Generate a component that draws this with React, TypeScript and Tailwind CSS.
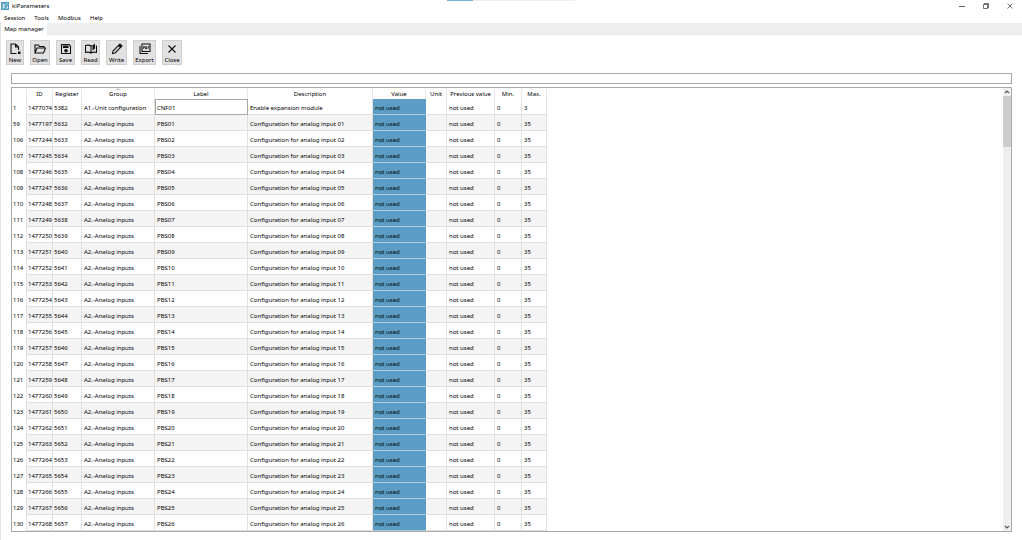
import React from 'react';
import clsx from 'clsx';

type Row = {
  index: number;
  id: number;
  register: number;
  group: string;
  label: string;
  description: string;
  max: number;
};

const pad = (n: number) => String(n).padStart(2, '0');

const rows: Row[] = [
  { index: 1, id: 1477074, register: 5382, group: 'A1.-Unit configuration', label: 'CNF01', description: 'Enable expansion module', max: 3 },
  ...Array.from({ length: 26 }, (_, i) => ({
    index: i === 0 ? 59 : 105 + i,
    id: i === 0 ? 1477197 : 1477243 + i,
    register: 5632 + i,
    group: 'A2.-Analog inputs',
    label: `PBS${pad(i + 1)}`,
    description: `Configuration for analog input ${pad(i + 1)}`,
    max: 35
  }))
];

const columns = [
  { name: '', width: 'w-[15px]' },
  { name: 'ID', width: 'w-[26px]' },
  { name: 'Register', width: 'w-[29px]' },
  { name: 'Group', width: 'w-[73px]', sorted: true },
  { name: 'Label', width: 'w-[93px]' },
  { name: 'Description', width: 'w-[125px]' },
  { name: 'Value', width: 'w-[53px]' },
  { name: 'Unit', width: 'w-[21px]' },
  { name: 'Previous value', width: 'w-[48px]' },
  { name: 'Min.', width: 'w-[27px]' },
  { name: 'Max.', width: 'w-[25px]' }
];

const tools = [
  {
    name: 'New',
    width: 'w-[18px]',
    icon: <>
        <path d="M15 21H4V2h9l6 6v6M13 2v6h6" />
        <path d="M18 17h5v5h-5z" fill="currentColor" stroke="none" />
      </>
  },
  {
    name: 'Open',
    width: 'w-[20px]',
    icon: <path d="M2 20V4h7l2 3h9v3M2 20l4-10h17l-4 10H2z" />
  },
  {
    name: 'Save',
    width: 'w-[19px]',
    icon: <>
        <path d="M3 3h15l3 3v15H3z" />
        <path d="M7 6h9v3H7z" fill="currentColor" />
        <circle cx="12" cy="15.500" r="2.500" fill="currentColor" />
      </>
  },
  {
    name: 'Read',
    width: 'w-[19px]',
    icon: <>
        <path d="M12 20c-3-2-7-2-11-1V5c4-1 8-1 11 1v14c3-2 7-2 11-1V5M12 6l3-1" />
        <path d="M15 5l5-4v10l-5 4z" fill="currentColor" stroke="none" />
      </>
  },
  {
    name: 'Write',
    width: 'w-[21px]',
    icon: <>
        <path d="M3 21l1-5L15 5l4 4L8 20z" />
        <path d="M16 4l2-2 4 4-2 2z" fill="currentColor" />
      </>
  },
  {
    name: 'Export',
    width: 'w-[23px]',
    icon: <>
        <path d="M6 2h16v15H6zM2 6v15h16" />
        <path d="M9 12V7h2v2.500H9M13 7v5h2V7zM20 7h-2v5M18 9.500h2" strokeWidth="1.300" />
      </>
  },
  {
    name: 'Close',
    width: 'w-[20px]',
    icon: <path d="M5 5l14 14M19 5L5 19" />
  }
];

function TitleBar() {
  return <header className="flex h-3 items-center justify-between pr-[9px]">
      <div className="flex items-center gap-[3px]">
        <svg viewBox="0 0 9 9" className="ml-px h-[8px] w-[8px]" aria-hidden="true">
          <path d="M0 0h9v9H0z" fill="#4d9cc0" />
          <path d="M2.500 1.500v6M5.500 2L3 5l2.500 2.500M7 4v3.500M7 1.500v1" stroke="#fff" strokeWidth="1" fill="none" />
        </svg>
        <h1>kiParameters</h1>
      </div>
      <div className="flex items-center gap-[18px]">
        <button type="button" aria-label="Minimize">
          <svg viewBox="0 0 6 6" className="h-[6px] w-[6px]"><path d="M0 3.500h6" stroke="#333" strokeWidth=".8" /></svg>
        </button>
        <button type="button" aria-label="Restore">
          <svg viewBox="0 0 6 6" className="h-[6px] w-[6px]"><path d="M.5 1.500h4v4h-4zM1.500 1.500v-1h4v4h-1" fill="none" stroke="#333" strokeWidth=".7" /></svg>
        </button>
        <button type="button" aria-label="Close window">
          <svg viewBox="0 0 6 6" className="h-[6px] w-[6px]"><path d="M.5.5l5 5M5.500.5l-5 5" stroke="#333" strokeWidth=".7" /></svg>
        </button>
      </div>
    </header>;
}

function Toolbar() {
  return <div className="flex gap-[6px] px-[5px] pt-[5px] pb-2">
      {tools.map(tool => <button key={tool.name} type="button" className={clsx('flex h-[25px] flex-col items-center justify-between border border-[#cfcfcf] bg-[#e1e1e1] pt-[2px]', tool.width)}>
          <svg viewBox="0 0 24 24" className="h-3 w-3 shrink-0 text-[#111]" fill="none" stroke="currentColor" strokeWidth="2.200">
            {tool.icon}
          </svg>
          <span>{tool.name}</span>
        </button>)}
    </div>;
}

function ParameterTable() {
  const cell = 'border-r border-b border-[#e0e0e0] p-0 pt-[2px] pl-[2px]';
  return <table className="w-[535px] table-fixed border-separate border-spacing-0 text-left">
      <thead>
        <tr className="h-[11px]">
          {columns.map(col => <th key={col.name} scope="col" aria-sort={col.sorted ? 'ascending' : undefined} className={clsx('relative border-r border-[#e8e8e8] p-0 text-center font-normal', col.width)}>
              {col.name}
              {col.sorted && <svg viewBox="0 0 6 3" className="absolute top-0 left-1/2 h-[3px] w-[6px] -translate-x-1/2"><path d="M1 2.500l2-2 2 2" fill="none" stroke="#777" strokeWidth=".7" /></svg>}
            </th>)}
        </tr>
      </thead>
      <tbody>
        {rows.map((row, i) => <tr key={row.id} className={clsx('h-4', i % 2 === 1 && 'bg-[#f4f4f4]')}>
            <th scope="row" className="border-r border-[#e0e0e0] bg-white p-0 pt-px pl-px text-left font-normal">{row.index}</th>
            <td className="border-r border-b border-[#e0e0e0] p-0 pt-[2px] pl-px">{row.id}</td>
            <td className="border-r border-b border-[#e0e0e0] p-0 pt-[2px] pl-px">{row.register}</td>
            <td className={cell}>{row.group}</td>
            <td className={clsx(cell, i === 0 && 'outline outline-1 -outline-offset-1 outline-[#a8a8a8]')}>{row.label}</td>
            <td className={cell}>{row.description}</td>
            <td className="border-b border-[#a9c9dc] bg-[#5b9dc4] p-0 pt-[2px] pl-[2px]">not used</td>
            <td className={cell} />
            <td className={cell}>not used</td>
            <td className={cell}>0</td>
            <td className={cell}>{row.max}</td>
          </tr>)}
      </tbody>
    </table>;
}

function ScrollBar() {
  return <div className="flex w-2 flex-col items-center bg-[#efefef]">
      <button type="button" aria-label="Scroll up" className="flex h-[8px] w-full items-center justify-center">
        <svg viewBox="0 0 6 6" className="h-[6px] w-[6px]"><path d="M1 4l2-2 2 2" fill="none" stroke="#555" strokeWidth="1.200" /></svg>
      </button>
      <div className="h-[51px] w-full bg-[#cdcdcd]" />
      <button type="button" aria-label="Scroll down" className="mt-auto flex h-[8px] w-full items-center justify-center">
        <svg viewBox="0 0 6 6" className="h-[6px] w-[6px]"><path d="M1 2l2 2 2-2" fill="none" stroke="#555" strokeWidth="1.200" /></svg>
      </button>
    </div>;
}

export default function App() {
  return <div className="relative min-h-screen bg-white font-['Noto_Sans','Open_Sans',sans-serif] text-[6px] leading-[8px] text-black">
      <div className="absolute inset-x-0 top-0 flex h-px justify-center">
        <div className="w-[26px] bg-[#6fb0e6]" />
        <div className="w-[102px] bg-[#efefef]" />
      </div>

      <TitleBar />

      <nav className="flex h-[11px] items-center gap-[9px] pl-1">
        {['Session', 'Tools', 'Modbus', 'Help'].map(item => <button key={item} type="button">{item}</button>)}
      </nav>

      <div role="tablist" className="flex h-3 border-b border-[#e6e6e6] bg-[#eeeeee]">
        <button type="button" role="tab" aria-selected="true" className="-mb-px w-[47px] border-l border-[#dedede] bg-white">Map manager</button>
      </div>

      <main className="border-l border-[#e4e4e4]">
        <Toolbar />
        <div className="pr-[10px] pb-2 pl-[10px]">
          <input type="text" aria-label="Filter parameters" className="mb-[3px] block h-[11px] w-full border border-[#a9a9a9] px-[2px] outline-none" />
          <div className="flex justify-between border border-[#a9a9a9]">
            <ParameterTable />
            <ScrollBar />
          </div>
        </div>
      </main>
    </div>;
}
